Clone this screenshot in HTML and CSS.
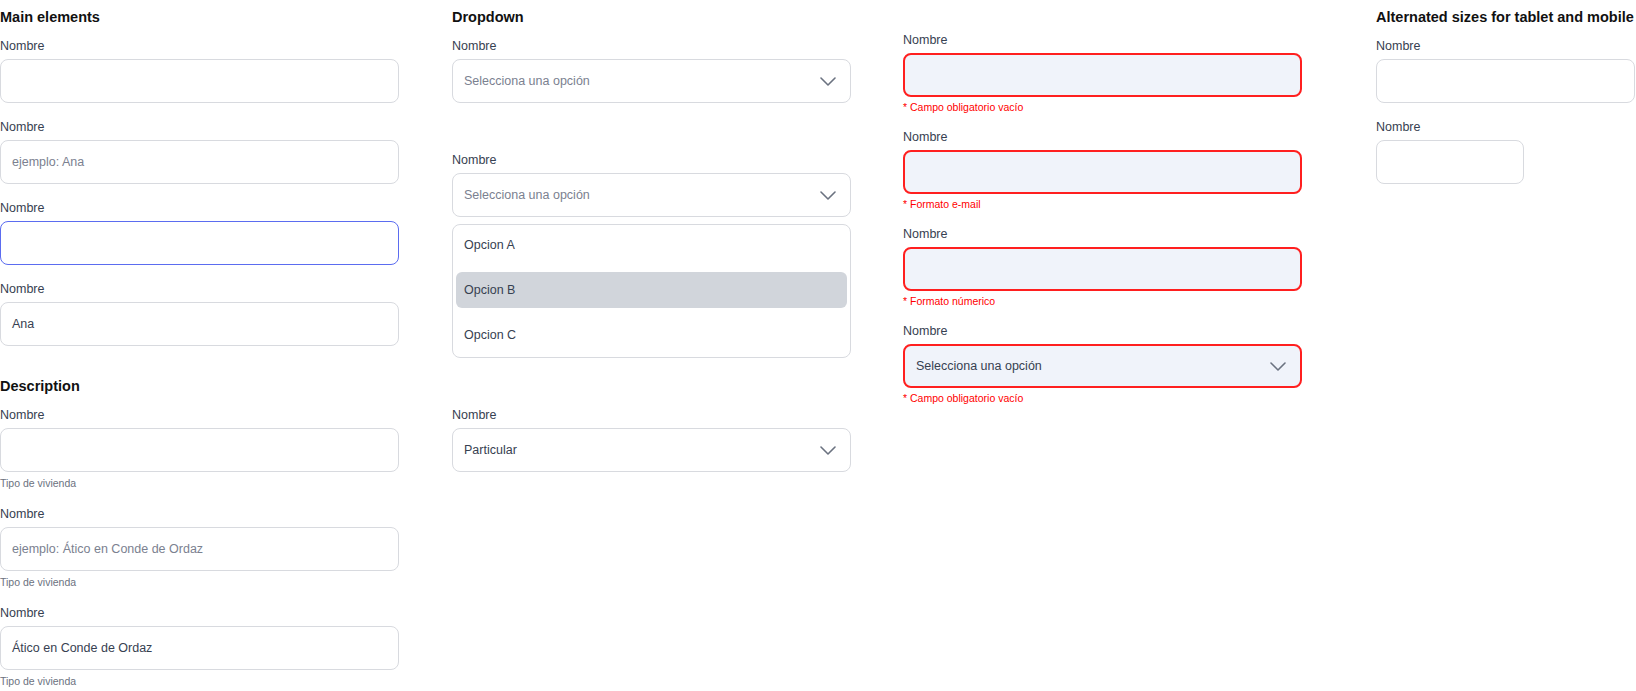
FILE: index.html
```html
<!DOCTYPE html>
<html lang="es">
<head>
  <meta charset="UTF-8">
  <title>Inputs</title>
  <link rel="stylesheet" href="styles.css">
</head>
<body>

<div class="board">

  <!-- Column 1: main elements + description -->
  <div class="col">
    <h2 class="title">Main elements</h2>
    <div class="field">
      <label class="label">Nombre</label>
      <div class="input"></div>
    </div>
    <div class="field">
      <label class="label">Nombre</label>
      <div class="input placeholder">ejemplo: Ana</div>
    </div>
    <div class="field">
      <label class="label">Nombre</label>
      <div class="input focus"></div>
    </div>
    <div class="field">
      <label class="label">Nombre</label>
      <div class="input">Ana</div>
    </div>

    <h2 class="title section">Description</h2>
    <div class="field">
      <label class="label">Nombre</label>
      <div class="input"></div>
      <div class="help">Tipo de vivienda</div>
    </div>
    <div class="field">
      <label class="label">Nombre</label>
      <div class="input placeholder">ejemplo: Ático en Conde de Ordaz</div>
      <div class="help">Tipo de vivienda</div>
    </div>
    <div class="field">
      <label class="label">Nombre</label>
      <div class="input">Ático en Conde de Ordaz</div>
      <div class="help">Tipo de vivienda</div>
    </div>
  </div>

  <!-- Column 2: dropdowns -->
  <div class="col">
    <h2 class="title">Dropdown</h2>
    <div class="field">
      <label class="label">Nombre</label>
      <div class="input select placeholder">
        <span>Selecciona una opción</span>
        <svg class="chev" viewBox="0 0 16 9"><path d="M1 1l7 7 7-7"/></svg>
      </div>
    </div>
    <div class="field spaced">
      <label class="label">Nombre</label>
      <div class="input select placeholder">
        <span>Selecciona una opción</span>
        <svg class="chev" viewBox="0 0 16 9"><path d="M1 1l7 7 7-7"/></svg>
      </div>
      <ul class="menu">
        <li>Opcion A</li>
        <li class="active">Opcion B</li>
        <li>Opcion C</li>
      </ul>
    </div>
    <div class="field spaced">
      <label class="label">Nombre</label>
      <div class="input select">
        <span>Particular</span>
        <svg class="chev" viewBox="0 0 16 9"><path d="M1 1l7 7 7-7"/></svg>
      </div>
    </div>
  </div>

  <!-- Column 3: errors -->
  <div class="col errors">
    <div class="field">
      <label class="label">Nombre</label>
      <div class="input error"></div>
      <div class="err">* Campo obligatorio vacío</div>
    </div>
    <div class="field">
      <label class="label">Nombre</label>
      <div class="input error"></div>
      <div class="err">* Formato e-mail</div>
    </div>
    <div class="field">
      <label class="label">Nombre</label>
      <div class="input error"></div>
      <div class="err">* Formato númerico</div>
    </div>
    <div class="field">
      <label class="label">Nombre</label>
      <div class="input select error">
        <span>Selecciona una opción</span>
        <svg class="chev" viewBox="0 0 16 9"><path d="M1 1l7 7 7-7"/></svg>
      </div>
      <div class="err">* Campo obligatorio vacío</div>
    </div>
  </div>

  <!-- Column 4: sizes -->
  <div class="col narrow">
    <h2 class="title nowrap">Alternated sizes for tablet and mobile</h2>
    <div class="field">
      <label class="label">Nombre</label>
      <div class="input tablet"></div>
    </div>
    <div class="field">
      <label class="label">Nombre</label>
      <div class="input mobile"></div>
    </div>
  </div>

</div>

</body>
</html>
```

FILE: styles.css
```css
body {
  margin: 0;
  font-family: 'Liberation Sans', Arial, sans-serif;
  background-color: #fff;
  color: #374151;
  overflow: hidden;
}

.board {
  display: grid;
  grid-template-columns: 452px 451px 473px 1fr;
  align-items: start;
}

.col {
  display: flex;
  flex-direction: column;
  width: 399px;
  padding-top: 7px;
}

.col.narrow {
  width: 260px;
}

.title {
  margin: 0 0 11px;
  font-size: 14.5px;
  line-height: 20px;
  font-weight: bold;
  color: #111;
}

.title.section {
  margin-top: 30px;
}

.nowrap {
  white-space: nowrap;
}

.field {
  display: flex;
  flex-direction: column;
  margin-top: 16px;
}

.title + .field {
  margin-top: 0;
}

.field.spaced {
  margin-top: 49px;
}

.label {
  font-size: 12.5px;
  line-height: 16px;
  color: #374151;
  margin-bottom: 5px;
}

.input {
  box-sizing: border-box;
  height: 44px;
  border: 1.5px solid #d8dadf;
  border-radius: 8px;
  padding: 0 11px;
  display: flex;
  align-items: center;
  font-size: 12.5px;
  color: #374151;
  background-color: #fff;
}

.placeholder {
  color: #7b8190;
}

.focus {
  border-color: #5b6cf0;
}

.select {
  justify-content: space-between;
  padding-right: 14px;
}

.chev {
  width: 16px;
  height: 9px;
  fill: none;
  stroke: #6b7280;
  stroke-width: 1.6;
  stroke-linecap: round;
  stroke-linejoin: round;
}

.menu {
  list-style: none;
  margin: 7px 0 0;
  padding: 2px 3px 4px;
  display: flex;
  flex-direction: column;
  gap: 9px;
  border: 1.5px solid #d8dadf;
  border-radius: 8px;
}

.menu li {
  height: 36px;
  padding: 0 8px;
  display: flex;
  align-items: center;
  font-size: 12.5px;
  color: #374151;
  border-radius: 6px;
}

.menu li.active {
  background-color: #d1d5db;
}

.help {
  margin-top: 4px;
  font-size: 10.5px;
  line-height: 14px;
  color: #6b7280;
}

.errors {
  padding-top: 32px;
}

.errors .field:first-child {
  margin-top: 0;
}

.errors .field {
  margin-top: 15px;
}

.error {
  border: 2px solid #ff1f1f;
  background-color: #f0f3fa;
}

.err {
  margin-top: 3px;
  font-size: 10.5px;
  line-height: 14px;
  color: #ff0000;
}

.tablet {
  width: 259px;
}

.mobile {
  width: 148px;
}
```
